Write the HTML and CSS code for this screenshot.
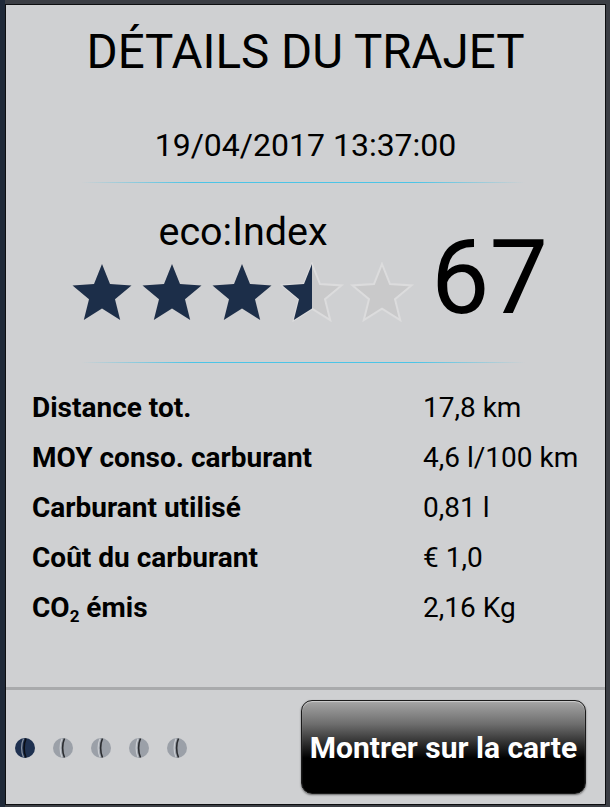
FILE: index.html
```html
<!DOCTYPE html>
<html lang="fr">
<head>
  <meta charset="UTF-8">
  <title>Détails du trajet</title>
  <link rel="stylesheet" href="styles.css">
</head>
<body>
  <div class="dialog">
    <h1 class="title">DÉTAILS DU TRAJET</h1>
    <p class="date">19/04/2017 13:37:00</p>
    <div class="sep"></div>

    <div class="score">
      <div class="eco">
        <div class="eco-label">eco:Index</div>
        <svg class="stars" width="350" height="60" viewBox="0 0 350 60">
          <defs>
            <polygon id="star" points="0,-31 8,-11 29.5,-9.6 13,4.2 18.2,25.1 0,13.6 -18.2,25.1 -13,4.2 -29.5,-9.6 -8,-11"/>
            <filter id="soft" x="-10%" y="-10%" width="120%" height="120%"><feGaussianBlur stdDeviation="0.7"/></filter>
            <clipPath id="half"><rect x="0" y="0" width="244" height="60"/></clipPath>
          </defs>
          <g class="empty" filter="url(#soft)">
            <use href="#star" x="244" y="33"/>
            <use href="#star" x="314" y="33"/>
          </g>
          <g class="full" filter="url(#soft)" clip-path="url(#half)">
            <use href="#star" x="34" y="33"/>
            <use href="#star" x="104" y="33"/>
            <use href="#star" x="174" y="33"/>
            <use href="#star" x="244" y="33"/>
          </g>
        </svg>
      </div>
      <div class="number">67</div>
    </div>
    <div class="sep"></div>

    <table class="stats">
      <tr><th>Distance tot.</th><td>17,8 km</td></tr>
      <tr><th>MOY conso. carburant</th><td>4,6 l/100 km</td></tr>
      <tr><th>Carburant utilisé</th><td>0,81 l</td></tr>
      <tr><th>Coût du carburant</th><td>€ 1,0</td></tr>
      <tr><th>CO<sub>2</sub> émis</th><td>2,16 Kg</td></tr>
    </table>

    <div class="footer">
      <div class="dots">
        <svg class="dot active" width="20" height="20" viewBox="0 0 20 20"><circle cx="10" cy="10" r="10"/><path class="hi" d="M8.5 0.8 C6 6 6 14 8.5 19.2"/><path class="ln" d="M11 0.5 C8.5 6 8.5 14 11 19.5"/></svg>
        <svg class="dot" width="20" height="20" viewBox="0 0 20 20"><circle cx="10" cy="10" r="10"/><path class="hi" d="M9 0.8 C6.5 6 6.5 14 9 19.2"/><path class="ln" d="M11.5 0.5 C9 6 9 14 11.5 19.5"/></svg>
        <svg class="dot" width="20" height="20" viewBox="0 0 20 20"><circle cx="10" cy="10" r="10"/><path class="hi" d="M9 0.8 C6.5 6 6.5 14 9 19.2"/><path class="ln" d="M11.5 0.5 C9 6 9 14 11.5 19.5"/></svg>
        <svg class="dot" width="20" height="20" viewBox="0 0 20 20"><circle cx="10" cy="10" r="10"/><path class="hi" d="M9 0.8 C6.5 6 6.5 14 9 19.2"/><path class="ln" d="M11.5 0.5 C9 6 9 14 11.5 19.5"/></svg>
        <svg class="dot" width="20" height="20" viewBox="0 0 20 20"><circle cx="10" cy="10" r="10"/><path class="hi" d="M9 0.8 C6.5 6 6.5 14 9 19.2"/><path class="ln" d="M11.5 0.5 C9 6 9 14 11.5 19.5"/></svg>
      </div>
      <button class="map-btn">Montrer sur la carte</button>
    </div>
  </div>
</body>
</html>
```

FILE: styles.css
```css
html, body { margin: 0; }
body {
  font-family: Roboto, "Liberation Sans", sans-serif;
  color: #000;
  background: linear-gradient(to right, #1f2938 0, #1f2938 5px, #3b3e44 5px);
  padding: 4px 4px 2px 5px;
  height: 807px;
  box-sizing: border-box;
}

.dialog {
  width: 601px;
  height: 801px;
  box-sizing: border-box;
  border: 1px solid #0d0e10;
  background: #cfd0d2;
  display: flex;
  flex-direction: column;
}

.title { margin: 19px 0 0; font-size: 47.5px; font-weight: 400; line-height: 56px; text-align: center; }
.date { margin: 45px 0 0; font-size: 32px; line-height: 40px; text-align: center; }

.sep {
  height: 1px;
  margin: 17px 80px 0 75px;
  background: linear-gradient(to right, rgba(76,196,230,0), #4cc4e6 25%, #4cc4e6 75%, rgba(76,196,230,0));
}

.score { display: flex; height: 152px; margin-top: 27px; margin-bottom: -17px; }
.eco { width: 370px; margin-left: 52px; display: flex; flex-direction: column; align-items: center; }
.eco-label { font-size: 39.5px; line-height: 44px; }
.stars { margin-top: 8px; display: block; }
.stars .full use { fill: #1f2e48; }
.stars .empty use { fill: #c9c9ca; stroke: #dcdcdd; stroke-width: 2; }
.number { margin: 16px 0 0 3px; font-size: 104px; line-height: 104px; }

.stats { margin: 20px 0 0 26px; border-collapse: collapse; font-size: 28px; }
.stats th, .stats td { padding: 0; height: 50px; line-height: 50px; text-align: left; white-space: nowrap; }
.stats th { width: 391px; font-weight: 700; }
.stats td { font-weight: 400; }
.stats sub { font-size: 17px; line-height: 0; vertical-align: -5px; }

.footer {
  margin-top: auto;
  height: 114px;
  border-top: 3px solid #a9aaac;
  display: flex;
  align-items: center;
  justify-content: space-between;
  padding: 0 19px 0 9px;
}
.dots { display: flex; gap: 18px; margin-top: 2px; }
.dot circle { fill: #9ba0a8; }
.dot .hi { fill: none; stroke: #c9ccd1; stroke-width: 1.2; }
.dot .ln { fill: none; stroke: #2a2c30; stroke-width: 1.6; }
.dot.active circle { fill: #1f3150; }
.dot.active .hi { stroke: #8b94a3; }
.dot.active .ln { stroke: #0b0f16; }

.map-btn {
  width: 285px;
  height: 94px;
  border: 1px solid #1a1a1a;
  border-radius: 11px;
  background: linear-gradient(#a6a6a6 0%, #6e6e6e 25%, #222 50%, #000 62%, #000 100%);
  box-shadow: inset 0 1px 1px rgba(255,255,255,0.45), 0 1px 2px rgba(0,0,0,0.5);
  color: #fff;
  font-family: Roboto, "Liberation Sans", sans-serif;
  font-size: 30px;
  font-weight: 700;
  padding: 0;
  cursor: pointer;
}
```
